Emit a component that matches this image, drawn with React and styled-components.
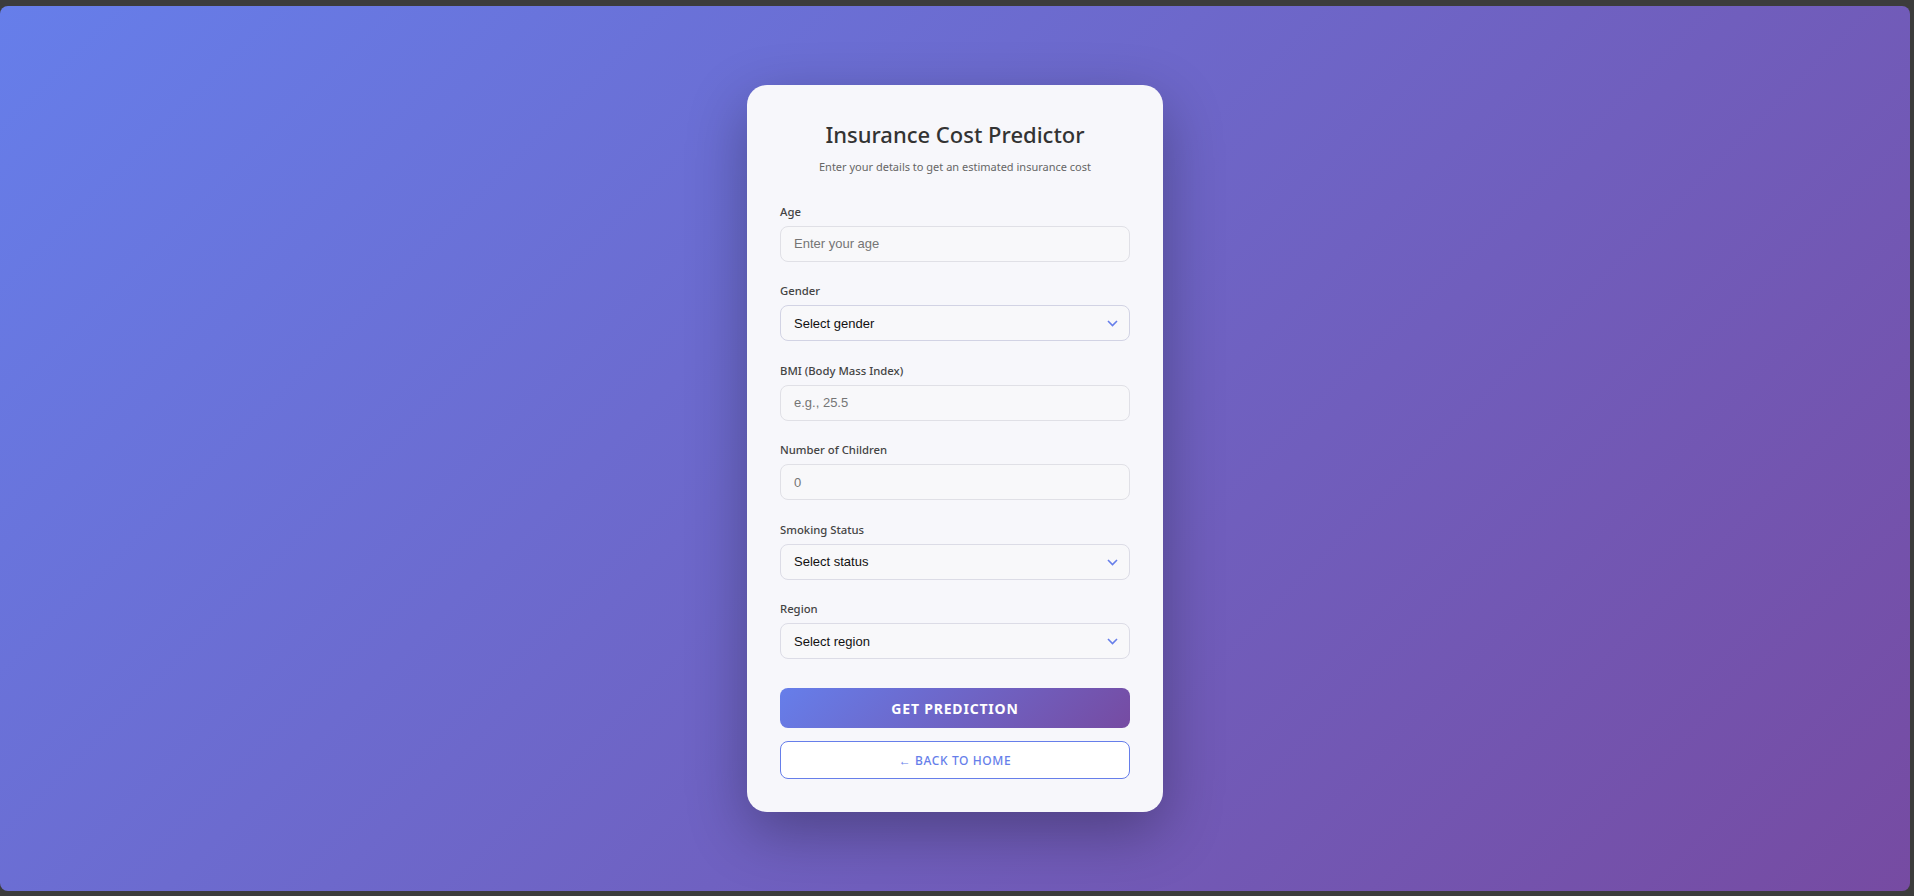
import React from "react";
import styled, { createGlobalStyle } from "styled-components";

const GlobalStyle = createGlobalStyle`
  * {
    box-sizing: border-box;
  }

  body {
    margin: 0;
    background: #3c3c3c;
    font-family: "Noto Sans", "Open Sans", sans-serif;
  }
`;

const Frame = styled.div`
  height: 896px;
  padding: 6px 4px 5px 0;
`;

const Page = styled.main`
  height: 100%;
  border-radius: 8px;
  background: linear-gradient(135deg, #667eea 0%, #764ba2 100%);

  display: flex;
  align-items: center;
  justify-content: center;
`;

const Card = styled.section`
  width: 416px;
  padding: 34px 33px 33px;
  border-radius: 20px;
  background: #f7f7fb;
  box-shadow: 0 20px 60px rgba(0, 0, 0, 0.3);
`;

const Header = styled.header`
  text-align: center;
  margin-bottom: 28px;
`;

const Title = styled.h1`
  margin: 0 0 9px;
  font-size: 22px;
  line-height: 30px;
  font-weight: 500;
  color: #333;
`;

const Subtitle = styled.p`
  margin: 0;
  font-size: 11px;
  line-height: 18px;
  color: #666;
`;

const Group = styled.div`
  margin-bottom: 21.5px;
`;

const Label = styled.label`
  display: block;
  margin-bottom: 7px;
  font-size: 11.3px;
  line-height: 15px;
  font-weight: 500;
  color: #444;
`;

const fieldBase = `
  display: block;
  width: 100%;
  height: 36px;
  padding: 0 13px;
  border-radius: 8px;
  background: #f8f8fa;
  font-family: "Liberation Sans", Arial, sans-serif;
  font-size: 13px;
  outline: none;
`;

const Input = styled.input`
  ${fieldBase}
  border: 1px solid #e0e0e6;
  color: #333;

  &::placeholder {
    color: #757575;
  }
`;

const SelectWrap = styled.div`
  position: relative;
`;

const Select = styled.select`
  ${fieldBase}
  border: 1px solid ${(p) => (p.$active ? "#d2d3e4" : "#dcdce6")};
  color: #111;
  appearance: none;
`;

const Chevron = styled.svg`
  position: absolute;
  right: 12px;
  top: 50%;
  width: 11px;
  height: 7px;
  margin-top: -3px;
  pointer-events: none;
`;

const PrimaryButton = styled.button`
  display: block;
  width: 100%;
  height: 40px;
  margin-top: 29px;
  border: none;
  border-radius: 8px;
  background: linear-gradient(135deg, #667eea 0%, #764ba2 100%);
  color: #fff;
  font-family: "Noto Sans", "Open Sans", sans-serif;
  font-size: 14px;
  font-weight: 700;
  letter-spacing: 0.8px;
  cursor: pointer;
`;

const BackButton = styled.button`
  display: block;
  width: 100%;
  height: 38px;
  margin-top: 13px;
  border: 1px solid #667eea;
  border-radius: 8px;
  background: #fff;
  color: #667eea;
  font-family: "Noto Sans", "Open Sans", sans-serif;
  font-size: 12px;
  font-weight: 500;
  letter-spacing: 0.6px;
  cursor: pointer;
`;

const ChevronIcon = () => (
  <Chevron viewBox="0 0 11 7" fill="none">
    <path d="M1 1l4.5 4.5L10 1" stroke="#667eea" strokeWidth="1.6" />
  </Chevron>
);

const SelectField = ({ id, label, placeholder, options, active }) => (
  <Group>
    <Label htmlFor={id}>{label}</Label>
    <SelectWrap>
      <Select id={id} defaultValue="" $active={active}>
        <option value="">{placeholder}</option>
        {options.map((o) => (
          <option key={o} value={o}>
            {o}
          </option>
        ))}
      </Select>
      <ChevronIcon />
    </SelectWrap>
  </Group>
);

const TextField = ({ id, label, placeholder }) => (
  <Group>
    <Label htmlFor={id}>{label}</Label>
    <Input id={id} type="number" placeholder={placeholder} />
  </Group>
);

const App = () => {
  return (
    <>
      <GlobalStyle />
      <Frame>
        <Page>
          <Card>
            <Header>
              <Title>Insurance Cost Predictor</Title>
              <Subtitle>
                Enter your details to get an estimated insurance cost
              </Subtitle>
            </Header>

            <form onSubmit={(e) => e.preventDefault()}>
              <TextField id="age" label="Age" placeholder="Enter your age" />
              <SelectField
                id="gender"
                label="Gender"
                placeholder="Select gender"
                options={["Male", "Female"]}
                active
              />
              <TextField
                id="bmi"
                label="BMI (Body Mass Index)"
                placeholder="e.g., 25.5"
              />
              <TextField id="children" label="Number of Children" placeholder="0" />
              <SelectField
                id="smoker"
                label="Smoking Status"
                placeholder="Select status"
                options={["Smoker", "Non-smoker"]}
              />
              <SelectField
                id="region"
                label="Region"
                placeholder="Select region"
                options={["Northeast", "Northwest", "Southeast", "Southwest"]}
              />

              <PrimaryButton type="submit">GET PREDICTION</PrimaryButton>
              <BackButton type="button">← BACK TO HOME</BackButton>
            </form>
          </Card>
        </Page>
      </Frame>
    </>
  );
};

export default App;
